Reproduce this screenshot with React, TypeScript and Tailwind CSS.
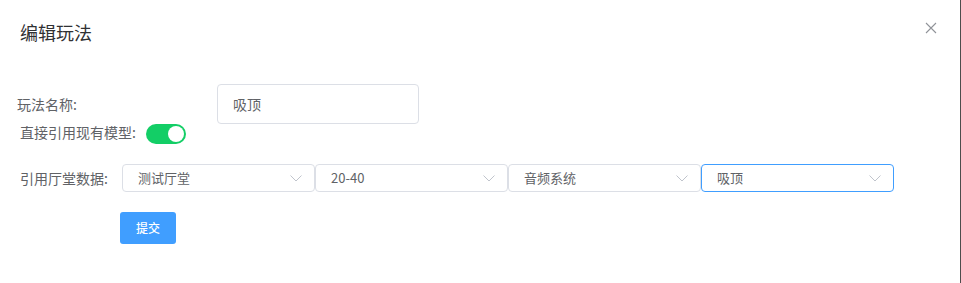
import React from "react";

const font = { fontFamily: '"Noto Sans CJK SC", "Noto Sans", sans-serif' };

function Chevron() {
  return (
    <svg width="12" height="7" viewBox="0 0 12 7" fill="none" className="shrink-0">
      <path d="M0.5 0.5 L6 6 L11.5 0.5" stroke="#c0c4cc" strokeWidth="1" />
    </svg>
  );
}

function Select({ value, active }: { value: string; active?: boolean }) {
  return (
    <div
      className={`w-[193px] h-[28px] flex items-center justify-between pl-[15px] pr-[12px] rounded-[4px] border bg-white text-[13px] text-[#606266] ${
        active ? "border-[#409eff]" : "border-[#dcdfe6]"
      }`}
    >
      <span>{value}</span>
      <Chevron />
    </div>
  );
}

export default function App() {
  return (
    <div
      className="w-[961px] h-[283px] bg-white border-r border-[#4d4d4d] flex flex-col"
      style={font}
    >
      <div className="flex items-start justify-between pl-[20px] pr-[23px] pt-[20px]">
        <h2 className="text-[18px] leading-[24px] text-[#303133]">编辑玩法</h2>
        <svg width="12" height="12" viewBox="0 0 12 12" className="mt-[2px]">
          <path d="M1 1 L11 11 M11 1 L1 11" stroke="#909399" strokeWidth="1.1" />
        </svg>
      </div>

      <div className="flex items-center mt-[40px] pl-[17px] h-[40px]">
        <span className="w-[200px] text-[14px] text-[#606266]">玩法名称:</span>
        <div className="w-[202px] h-[40px] rounded-[4px] border border-[#dcdfe6] flex items-center pl-[15px] text-[14px] text-[#606266]">
          吸顶
        </div>
      </div>

      <div className="flex items-center pl-[20px] h-[20px]">
        <span className="w-[126px] text-[14px] leading-[20px] text-[#606266] -mt-[5px]">直接引用现有模型:</span>
        <div className="w-[40px] h-[20px] rounded-full bg-[#13ce66] flex items-center justify-end pr-[2px]">
          <div className="w-[16px] h-[16px] rounded-full bg-white" />
        </div>
      </div>

      <div className="flex items-center mt-[20px] pl-[20px] h-[28px]">
        <span className="w-[102px] text-[14px] text-[#606266]">引用厅堂数据:</span>
        <Select value="测试厅堂" />
        <Select value="20-40" />
        <Select value="音频系统" />
        <Select value="吸顶" active />
      </div>

      <div className="mt-[20px] pl-[120px]">
        <button className="w-[56px] h-[32px] rounded-[3px] bg-[#409eff] text-white text-[12px] font-medium">
          提交
        </button>
      </div>
    </div>
  );
}
